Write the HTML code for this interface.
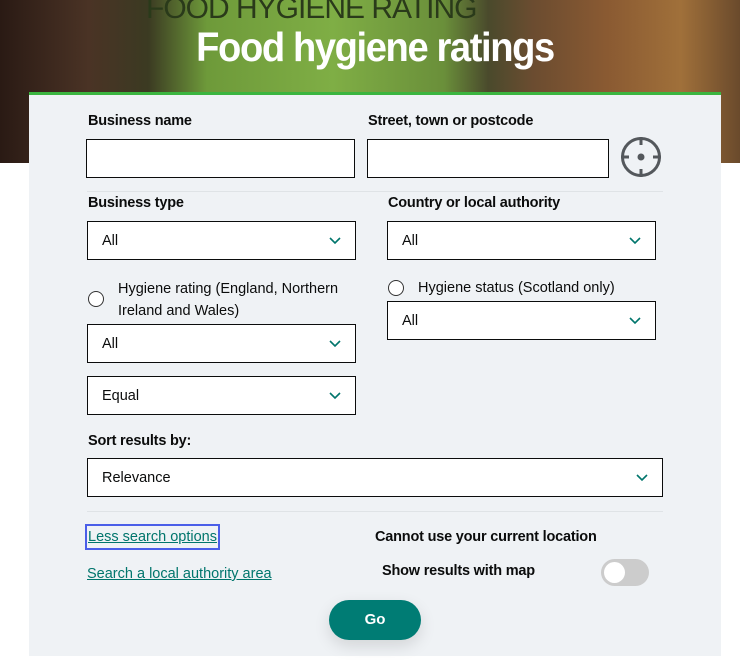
<!DOCTYPE html>
<html><head><style>
body{margin:0;width:740px;height:667px;background:#fff;position:relative;overflow:hidden;font-family:"Liberation Sans",sans-serif;color:#0b0c0c}
.hero{position:absolute;left:0;top:0;width:740px;height:163px;background:linear-gradient(90deg,#2a1a14 0%,#4a3325 12%,#3b3a22 20%,#6e9a3a 28%,#7fae45 45%,#6a8f3a 60%,#4a4a2c 66%,#6b4c30 72%,#8a5a32 82%,#a0703a 92%,#6a4a2c 100%)}
.sign{position:absolute;left:146px;top:-8px;font:30px "Liberation Sans",sans-serif;color:#2a3a1a;letter-spacing:-1px}
h1{position:absolute;left:0;width:750px;text-align:center;top:24px;margin:0;font:bold 41px "Liberation Sans",sans-serif;color:#fff;letter-spacing:-1.5px;transform:scaleX(.93)}
.panel{position:absolute;left:29px;top:92px;width:692px;height:561px;background:#eff2f5;border-top:3px solid #3bb540}
.a{position:absolute}
.lab{font-weight:bold;font-size:14.5px;letter-spacing:-.2px}
.box{background:#fff;border:1px solid #0b0c0c;box-sizing:border-box}
.sel{background:#fff;border:1px solid #0b0c0c;box-sizing:border-box;font-size:14.5px;padding-left:14px;line-height:38px}
.sel svg{position:absolute;right:14px;top:15px}
.hr{height:1px;background:#dfe3e6}
.t{font-size:14.5px}
.radio{width:14px;height:14px;border:1px solid #333;border-radius:50%;background:#fff}
a{color:#00756c;font-size:14.5px;text-decoration:underline}
</style></head><body>
<div class="hero"><div class="sign">FOOD HYGIENE RATING</div></div>
<h1>Food hygiene ratings</h1>
<div class="panel"></div>
<div class="a lab" style="left:88px;top:113px">Business name</div>
<div class="a lab" style="left:368px;top:113px">Street, town or postcode</div>
<div class="a box" style="left:86px;top:139px;width:269px;height:39px"></div>
<div class="a box" style="left:367px;top:139px;width:242px;height:39px"></div>
<svg class="a" style="left:619px;top:135px" width="44" height="44" viewBox="0 0 44 44"><circle cx="22" cy="22" r="18.5" fill="none" stroke="#54585c" stroke-width="3"/><circle cx="22" cy="22" r="3.5" fill="#54585c"/><path d="M22 2v8M22 34v8M2 22h8M34 22h8" stroke="#54585c" stroke-width="3"/></svg>
<div class="a hr" style="left:87px;top:191px;width:576px"></div>
<div class="a lab" style="left:88px;top:195px">Business type</div>
<div class="a lab" style="left:388px;top:195px">Country or local authority</div>
<div class="a sel" style="left:87px;top:221px;width:269px;height:39px">All<svg width="12" height="8"><path d="M1 1l5 5 5-5" fill="none" stroke="#00756c" stroke-width="1.6"/></svg></div>
<div class="a sel" style="left:387px;top:221px;width:269px;height:39px">All<svg width="12" height="8"><path d="M1 1l5 5 5-5" fill="none" stroke="#00756c" stroke-width="1.6"/></svg></div>
<div class="a radio" style="left:88px;top:291px"></div>
<div class="a t" style="left:118px;top:278px;line-height:22px;width:250px">Hygiene rating (England, Northern Ireland and Wales)</div>
<div class="a radio" style="left:388px;top:280px"></div>
<div class="a t" style="left:418px;top:280px">Hygiene status (Scotland only)</div>
<div class="a sel" style="left:387px;top:301px;width:269px;height:39px">All<svg width="12" height="8"><path d="M1 1l5 5 5-5" fill="none" stroke="#00756c" stroke-width="1.6"/></svg></div>
<div class="a sel" style="left:87px;top:324px;width:269px;height:39px">All<svg width="12" height="8"><path d="M1 1l5 5 5-5" fill="none" stroke="#00756c" stroke-width="1.6"/></svg></div>
<div class="a sel" style="left:87px;top:376px;width:269px;height:39px">Equal<svg width="12" height="8"><path d="M1 1l5 5 5-5" fill="none" stroke="#00756c" stroke-width="1.6"/></svg></div>
<div class="a lab" style="left:88px;top:433px">Sort results by:</div>
<div class="a sel" style="left:87px;top:458px;width:576px;height:39px">Relevance<svg width="12" height="8"><path d="M1 1l5 5 5-5" fill="none" stroke="#00756c" stroke-width="1.6"/></svg></div>
<div class="a hr" style="left:87px;top:511px;width:576px"></div>
<div class="a" style="left:85px;top:524px;border:2px solid #4a5ee8;padding:0 1px;line-height:21px"><a>Less search options</a></div>
<div class="a" style="left:87px;top:565px"><a>Search a local authority area</a></div>
<div class="a lab" style="left:375px;top:529px">Cannot use your current location</div>
<div class="a lab" style="left:382px;top:563px">Show results with map</div>
<div class="a" style="left:601px;top:559px;width:48px;height:27px;border-radius:14px;background:#ccc"><div style="position:absolute;left:3px;top:3px;width:21px;height:21px;border-radius:50%;background:#fff"></div></div>
<div class="a" style="left:329px;top:600px;width:92px;height:40px;border-radius:20px;background:#007c74;color:#fff;font-weight:bold;font-size:15px;text-align:center;line-height:40px;box-shadow:0 6px 16px rgba(0,0,0,.12)">Go</div>
</body></html>
